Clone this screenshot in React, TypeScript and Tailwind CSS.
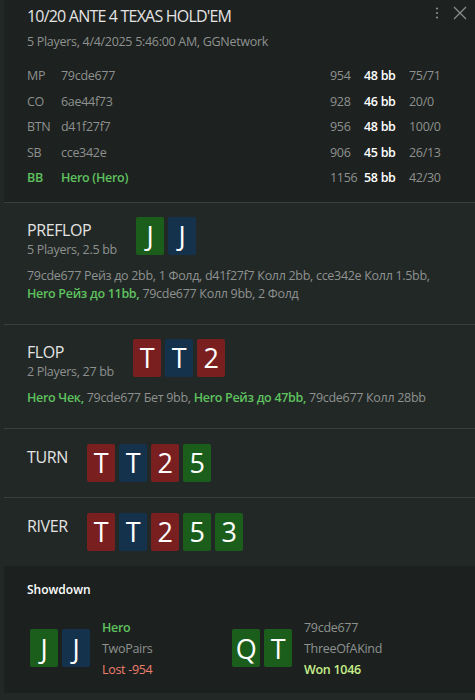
import React from "react";

type Suit = "g" | "b" | "r";

const suitBg: Record<Suit, string> = {
  g: "bg-[#1b5e1c]",
  b: "bg-[#15324d]",
  r: "bg-[#7a1f1f]",
};

function Card({ rank, suit }: { rank: string; suit: Suit }) {
  return (
    <div
      className={`w-[28px] h-[38px] rounded-[2px] grid place-items-center text-white text-[27px] leading-none tracking-[-0.5px] ${suitBg[suit]}`}
    >
      {rank}
    </div>
  );
}

function Cards({ cards }: { cards: [string, Suit][] }) {
  return (
    <div className="flex gap-1">
      {cards.map(([r, s], i) => (
        <Card key={i} rank={r} suit={s} />
      ))}
    </div>
  );
}

const players = [
  { pos: "MP", name: "79cde677", chips: "954", bb: "48 bb", stat: "75/71" },
  { pos: "CO", name: "6ae44f73", chips: "928", bb: "46 bb", stat: "20/0" },
  { pos: "BTN", name: "d41f27f7", chips: "956", bb: "48 bb", stat: "100/0" },
  { pos: "SB", name: "cce342e", chips: "906", bb: "45 bb", stat: "26/13" },
  { pos: "BB", name: "Hero (Hero)", chips: "1156", bb: "58 bb", stat: "42/30", hero: true },
];

const Hero = ({ children }: { children: React.ReactNode }) => (
  <span className="font-semibold text-[#5fc25f]">{children}</span>
);

export default function App() {
  return (
    <div
      className="w-[475px] h-[700px] bg-[#222826] text-[#8e918f] overflow-hidden"
      style={{ fontFamily: '"Open Sans", "Noto Sans", sans-serif' }}
    >
      {/* Header */}
      <div className="ml-1 bg-[#1d211f] pl-[23px] pr-2 pt-[3px] pb-[10px] relative">
        <div className="absolute right-2 top-[6px] flex items-center gap-[14px] text-[#8a8d8b]">
          <svg width="4" height="12" viewBox="0 0 4 12" fill="currentColor">
            <circle cx="2" cy="1.5" r="1.1" />
            <circle cx="2" cy="6" r="1.1" />
            <circle cx="2" cy="10.5" r="1.1" />
          </svg>
          <svg width="14" height="14" viewBox="0 0 14 14" stroke="currentColor" strokeWidth="1.3">
            <path d="M1 1 L13 13 M13 1 L1 13" />
          </svg>
        </div>
        <div className="text-[16px] text-[#e4e4e4] leading-[26px] tracking-[-0.8px]">
          10/20 ANTE 4 TEXAS HOLD'EM
        </div>
        <div className="text-[12.5px] leading-[20px] mt-[3px] tracking-[-0.3px]">
          5 Players, 4/4/2025 5:46:00 AM, GGNetwork
        </div>
        <div className="mt-[12px] flex flex-col">
          {players.map((p) => (
            <div key={p.pos} className="flex items-center h-[25.5px] text-[12.5px] tracking-[-0.3px]">
              <span className={`w-[34px] ${p.hero ? "font-semibold text-[#5fc25f]" : ""}`}>{p.pos}</span>
              <span className={`flex-1 ${p.hero ? "font-semibold text-[#5fc25f]" : ""}`}>{p.name}</span>
              <span className="w-[34px]">{p.chips}</span>
              <span className="w-[45px] font-semibold text-white">{p.bb}</span>
              <span className="w-[58px]">{p.stat}</span>
            </div>
          ))}
        </div>
      </div>

      {/* Preflop */}
      <div className="ml-1 border-t border-[#3a3f3d] pl-[23px] pr-2 pt-[14px] pb-[21px]">
        <div className="flex items-start gap-[19px]">
          <div className="pt-[2px]">
            <div className="text-[16px] text-[#e4e4e4] leading-[22px] tracking-[-0.4px]">PREFLOP</div>
            <div className="text-[12.5px] leading-[18px] tracking-[-0.3px]">5 Players, 2.5 bb</div>
          </div>
          <Cards cards={[["J", "g"], ["J", "b"]]} />
        </div>
        <div className="mt-[8px] w-[415px] text-[12.5px] leading-[18px] tracking-[-0.3px]">
          79cde677 Рейз до 2bb, 1 Фолд, d41f27f7 Колл 2bb, cce342e Колл 1.5bb,{" "}
          <Hero>Hero Рейз до 11bb,</Hero> 79cde677 Колл 9bb, 2 Фолд
        </div>
      </div>

      {/* Flop */}
      <div className="ml-1 border-t border-[#3a3f3d] pl-[23px] pr-2 pt-[14px] pb-[21px]">
        <div className="flex items-start gap-[19px]">
          <div className="pt-[2px]">
            <div className="text-[16px] text-[#e4e4e4] leading-[22px] tracking-[-0.4px]">FLOP</div>
            <div className="text-[12.5px] leading-[18px] tracking-[-0.3px]">2 Players, 27 bb</div>
          </div>
          <Cards cards={[["T", "r"], ["T", "b"], ["2", "r"]]} />
        </div>
        <div className="mt-[8px] text-[12.5px] leading-[18px] tracking-[-0.3px]">
          <Hero>Hero Чек,</Hero> 79cde677 Бет 9bb, <Hero>Hero Рейз до 47bb,</Hero> 79cde677 Колл 28bb
        </div>
      </div>

      {/* Turn */}
      <div className="ml-1 border-t border-[#3a3f3d] pl-[23px] pr-2 pt-[15px] pb-[15px]">
        <div className="flex items-start gap-[20px]">
          <div className="text-[16px] text-[#e4e4e4] leading-[22px] tracking-[-0.4px] pt-[2px] w-[40px]">TURN</div>
          <Cards cards={[["T", "r"], ["T", "b"], ["2", "r"], ["5", "g"]]} />
        </div>
      </div>

      {/* River */}
      <div className="ml-1 border-t border-[#3a3f3d] pl-[23px] pr-2 pt-[15px] pb-[15px]">
        <div className="flex items-start gap-[20px]">
          <div className="text-[16px] text-[#e4e4e4] leading-[22px] tracking-[-0.4px] pt-[2px] w-[40px]">RIVER</div>
          <Cards cards={[["T", "r"], ["T", "b"], ["2", "r"], ["5", "g"], ["3", "g"]]} />
        </div>
      </div>

      {/* Showdown */}
      <div className="ml-1 bg-[#1c211f] pl-[23px] pr-2 pt-[15px] pb-[13px]">
        <div className="text-[12px] font-semibold text-white leading-[18px]">Showdown</div>
        <div className="mt-[18px] flex pl-[3px]">
          <div className="flex items-center gap-3 w-[202px]">
            <Cards cards={[["J", "g"], ["J", "b"]]} />
            <div className="text-[12.5px] leading-[21px] tracking-[-0.3px]">
              <div className="font-semibold text-[#5fc25f]">Hero</div>
              <div>TwoPairs</div>
              <div className="text-[#ef7f6f]">Lost -954</div>
            </div>
          </div>
          <div className="flex items-center gap-3">
            <Cards cards={[["Q", "g"], ["T", "g"]]} />
            <div className="text-[12.5px] leading-[21px] tracking-[-0.3px]">
              <div>79cde677</div>
              <div>ThreeOfAKind</div>
              <div className="font-semibold text-[#c6ef8a]">Won 1046</div>
            </div>
          </div>
        </div>
      </div>
    </div>
  );
}
